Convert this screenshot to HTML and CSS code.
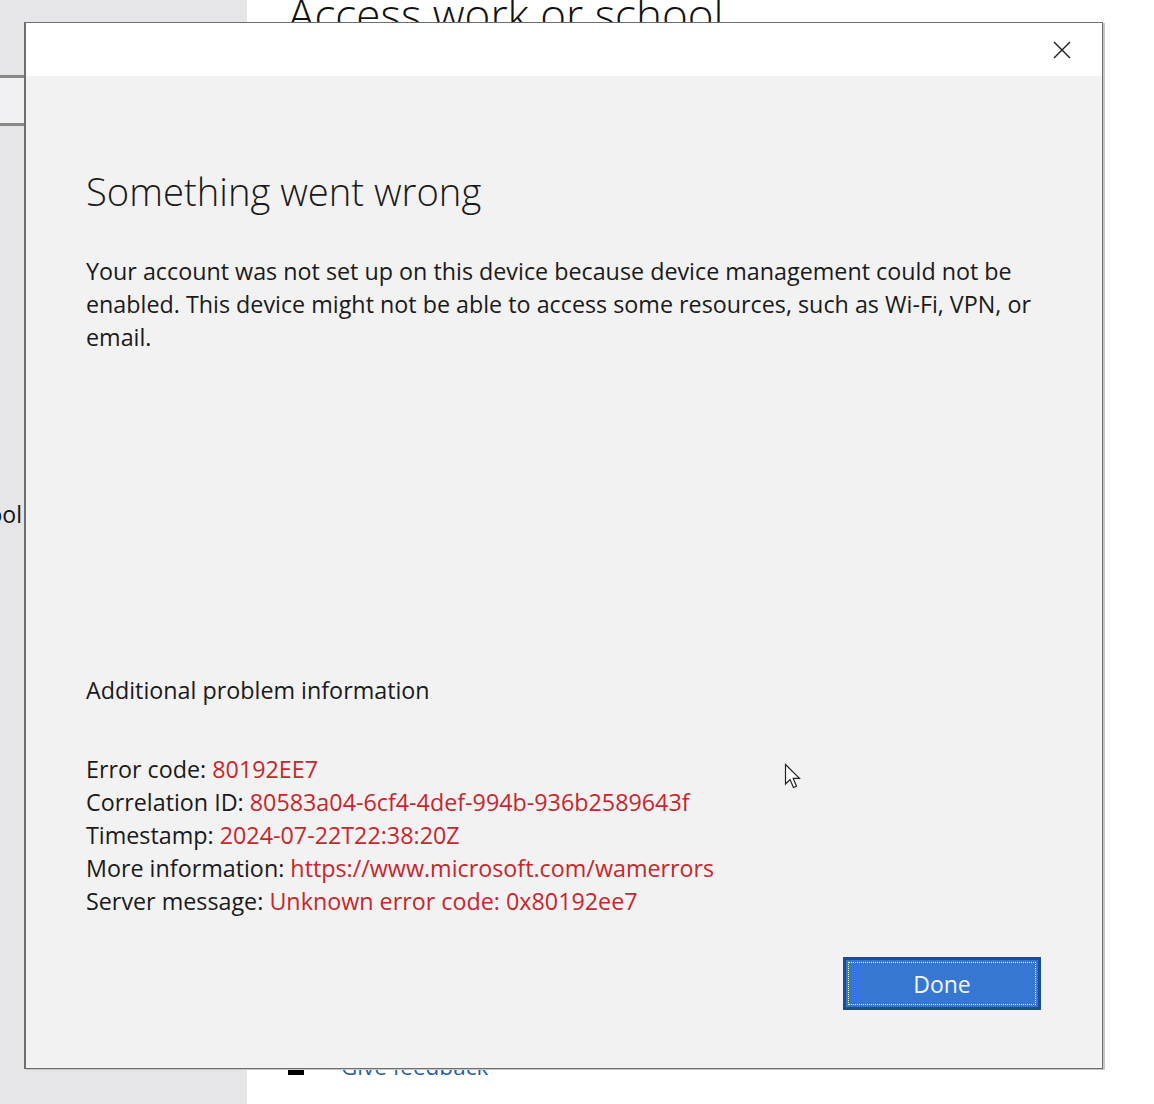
FILE: index.html
```html
<!DOCTYPE html>
<html lang="en">
<head>
<meta charset="utf-8">
<title>Something went wrong</title>
<link rel="stylesheet" href="styles.css">
</head>
<body>
<div class="page">
  <nav class="nav">
    <div class="nav-selected"></div>
    <div class="nav-item">Access work or school</div>
  </nav>
  <main class="main">
    <h1 class="main-title">Access work or school</h1>
    <div class="feedback">
      <span class="feedback-icon"></span>
      <span class="feedback-link">Give feedback</span>
    </div>
  </main>
</div>

<div class="dialog">
  <div class="titlebar">
    <button class="close" aria-label="Close">
      <svg width="18" height="18" viewBox="0 0 18 18"><path d="M1 1 L17 17 M17 1 L1 17" stroke="#1a1a1a" stroke-width="1.4" fill="none"/></svg>
    </button>
  </div>
  <div class="content">
    <h2 class="heading">Something went wrong</h2>
    <p class="message">Your account was not set up on this device because device management could not be enabled. This device might not be able to access some resources, such as Wi-Fi, VPN, or email.</p>
    <div class="spacer"></div>
    <h3 class="subheading">Additional problem information</h3>
    <div class="details">
      <div>Error code: <span class="val">80192EE7</span></div>
      <div>Correlation ID: <span class="val">80583a04-6cf4-4def-994b-936b2589643f</span></div>
      <div>Timestamp: <span class="val">2024-07-22T22:38:20Z</span></div>
      <div>More information: <span class="val">https://www.microsoft.com/wamerrors</span></div>
      <div>Server message: <span class="val">Unknown error code: 0x80192ee7</span></div>
    </div>
    <div class="actions">
      <button class="done"><span class="done-inner">Done</span></button>
    </div>
  </div>
</div>

<svg class="cursor" width="20" height="28" viewBox="0 0 20 28">
  <path d="M1.5 1.5 L1.5 21 L6 16.5 L9.5 24.5 L12.5 23.2 L9.2 15.4 L15.5 15.4 Z" fill="#ffffff" stroke="#222" stroke-width="1.2" stroke-linejoin="miter"/>
</svg>
</body>
</html>
```
FILE: styles.css
```css
* { box-sizing: border-box; }
html, body { margin: 0; padding: 0; }
body {
  width: 1154px;
  height: 1104px;
  overflow: hidden;
  position: relative;
  background: #ffffff;
  font-family: "Open Sans", "Noto Sans", sans-serif;
  color: #1a1a1a;
}
.page {
  display: flex;
  height: 1104px;
}
.nav {
  width: 247px;
  background: #e6e6e9;
  position: relative;
  padding-top: 75px;
}
.nav-selected {
  height: 51px;
  background: #f1f1f3;
  border-top: 3px solid #8a8a8a;
  border-bottom: 3px solid #8a8a8a;
}
.nav-item {
  margin-top: 372px;
  margin-left: -232px;
  width: 254px;
  text-align: right;
  font-size: 23px;
  white-space: nowrap;
  color: #111;
}
.main {
  flex: 1;
  display: flex;
  flex-direction: column;
  padding-left: 41px;
}
.main-title {
  margin: -14px 0 0 0;
  font-size: 44px;
  font-weight: 300;
  color: #111;
  line-height: 56px;
  white-space: nowrap;
}
.feedback {
  margin-top: auto;
  margin-bottom: 25px;
  display: flex;
  align-items: center;
  gap: 37px;
}
.feedback-icon {
  width: 16px;
  height: 16px;
  background: #000;
}
.feedback-link {
  font-size: 22.5px;
  line-height: 24px;
  color: #1f5fa8;
}

.dialog {
  position: absolute;
  left: 24px;
  top: 22px;
  width: 1079px;
  height: 1047px;
  border: 1px solid #6e6e6e;
  border-left-width: 2px;
  box-shadow: 2px 1px 0 #c6c6c6;
  background: #f2f2f2;
  display: flex;
  flex-direction: column;
}
.titlebar {
  height: 53px;
  background: #ffffff;
  display: flex;
  justify-content: flex-end;
  align-items: center;
  padding-right: 25px;
  flex-shrink: 0;
}
.close {
  border: 0;
  background: transparent;
  padding: 0;
  width: 30px;
  height: 30px;
  display: flex;
  align-items: center;
  justify-content: center;
}
.content {
  flex: 1;
  display: flex;
  flex-direction: column;
  padding: 91px 60px 58px 60px;
}
.heading {
  margin: 0;
  font-size: 38.2px;
  font-weight: 300;
  line-height: 48px;
  color: #1a1a1a;
}
.message {
  margin: 40px 0 0 0;
  font-size: 23.3px;
  line-height: 33px;
  color: #1a1a1a;
}
.spacer { flex: 1; }
.subheading {
  margin: 0;
  font-size: 23.3px;
  font-weight: 400;
  line-height: 33px;
}
.details {
  margin-top: 46px;
  font-size: 23.3px;
  line-height: 33px;
}
.val { color: #c8262c; }
.actions {
  display: flex;
  justify-content: flex-end;
  margin-top: 39px;
  padding-right: 1px;
}
.done {
  width: 198px;
  height: 53px;
  background: #3577d3;
  border: 3px solid #1f4e8f;
  padding: 2px;
  font-family: inherit;
  cursor: default;
}
.done-inner {
  display: flex;
  align-items: center;
  justify-content: center;
  width: 100%;
  height: 100%;
  border: 1px dotted #ffffff;
  color: #f4f8ff;
  font-size: 23px;
}
.cursor {
  position: absolute;
  left: 784px;
  top: 763px;
}
```
